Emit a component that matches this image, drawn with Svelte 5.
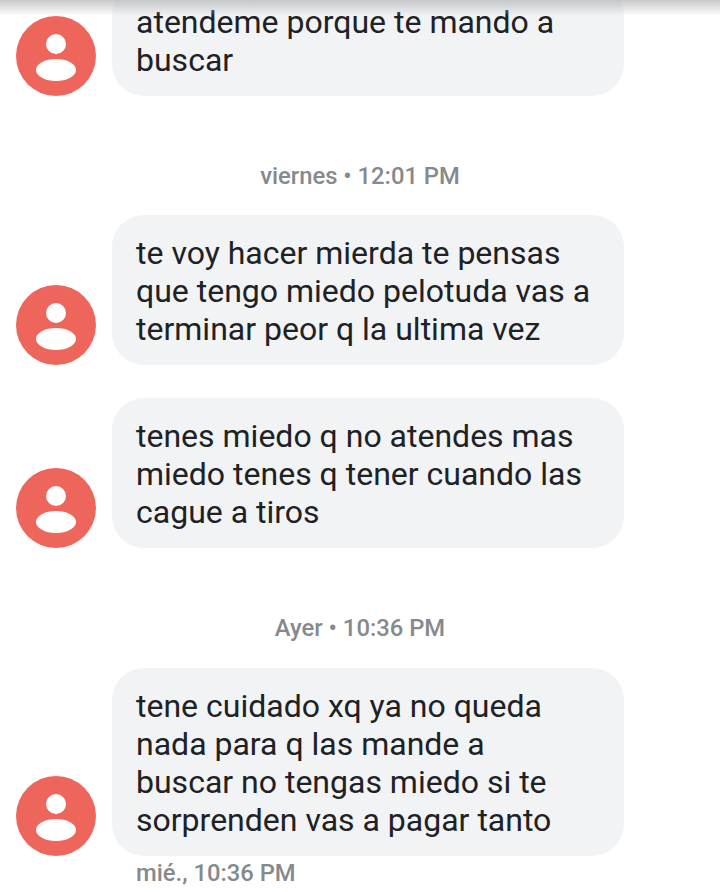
<script>
  const items = [
    { lines: ['atendeme porque te mando a', 'buscar'] },
    { stamp: 'viernes • 12:01 PM' },
    { lines: ['te voy hacer mierda te pensas', 'que tengo miedo pelotuda vas a', 'terminar peor q la ultima vez'] },
    { lines: ['tenes miedo q no atendes mas', 'miedo tenes q tener cuando las', 'cague a tiros'] },
    { stamp: 'Ayer • 10:36 PM', late: true },
    { lines: ['tene cuidado xq ya no queda', 'nada para q las mande a', 'buscar no tengas miedo si te', 'sorprenden vas a pagar tanto'] }
  ];
</script>

<div class="screen">
  <div class="list">
    {#each items as item}
      {#if item.stamp}
        <div class="stamp" class:late={item.late}>{item.stamp}</div>
      {:else}
        <div class="row">
          <svg class="avatar" viewBox="0 0 80 80" aria-hidden="true">
            <circle cx="40" cy="40" r="40" fill="#ee665b" />
            <circle cx="40" cy="28" r="10" fill="#fff" />
            <ellipse cx="40" cy="54" rx="20" ry="11" fill="#fff" />
          </svg>
          <div class="bubble">
            {#each item.lines as line}
              <div>{line}</div>
            {/each}
          </div>
        </div>
      {/if}
    {/each}
  </div>
  <div class="foot">mié., 10:36 PM</div>
  <div class="shade"></div>
</div>

<style>
  :global(body) {
    margin: 0;
    background: #fff;
  }
  .screen {
    position: relative;
    width: 720px;
    height: 892px;
    overflow: hidden;
    background: #fff;
    font-family: Roboto, "Liberation Sans", sans-serif;
  }
  .shade {
    position: absolute;
    top: 0;
    left: 0;
    right: 0;
    height: 16px;
    background: linear-gradient(rgba(190, 191, 194, 0.85), rgba(255, 255, 255, 0));
  }
  .list {
    margin-top: -16px;
    display: flex;
    flex-direction: column;
    gap: 33px;
  }
  .row {
    display: flex;
    align-items: flex-end;
    gap: 16px;
    padding-left: 16px;
  }
  .avatar {
    width: 80px;
    height: 80px;
    flex: none;
  }
  .bubble {
    width: 512px;
    box-sizing: border-box;
    padding: 19px 24px 17px;
    border-radius: 32px;
    background: #f1f3f5;
    color: #202124;
    font-size: 32px;
    line-height: 38px;
  }
  .stamp {
    margin: 28px 0 -13px;
    height: 38px;
    line-height: 38px;
    text-align: center;
    color: #86898d;
    font-size: 23.8px;
    font-weight: 500;
  }
  .stamp.late {
    margin-bottom: -12px;
  }
  .foot {
    margin: 1px 0 0 136px;
    line-height: 32px;
    color: #86898d;
    font-size: 23.8px;
    font-weight: 500;
  }
</style>
